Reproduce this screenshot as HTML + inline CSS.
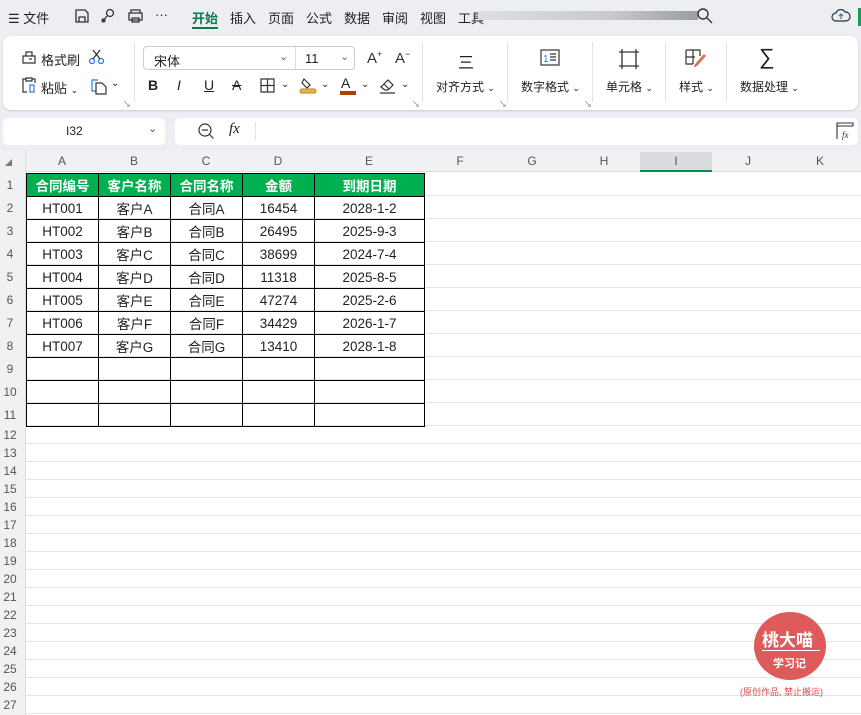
<!DOCTYPE html>
<html style="width:861px;height:715px;overflow:hidden"><head><meta charset="utf-8"><style>
*{margin:0;padding:0;box-sizing:border-box}
body{width:861px;height:715px;overflow:hidden;background:#eceef2;font-family:"Liberation Sans","Noto Sans CJK SC",sans-serif;color:#222;position:relative}
.a{position:absolute;white-space:nowrap}
.t{font-size:13px}
.gh{font-size:12px;color:#555;text-align:center}
svg{position:absolute}
</style></head><body>
<div class="a t" style="left:8px;top:8px">☰ 文件</div>
<svg style="left:74px;top:8px" width="16" height="16" fill="none" stroke="#333" stroke-width="1.3"><path d="M2 2h9l3 3v9H2z M5 9h6v5H5z"/></svg>
<svg style="left:100px;top:8px" width="16" height="16" fill="none" stroke="#333" stroke-width="1.3"><circle cx="10" cy="5" r="3.5"/><path d="M7 8L3 13"/><circle cx="3.5" cy="12.5" r="1.5"/></svg>
<svg style="left:127px;top:8px" width="17" height="16" fill="none" stroke="#333" stroke-width="1.3"><path d="M4 5V2h9v3M2 5h13v7H2zM5 10h7v4H5z"/></svg>
<div class="a t" style="left:155px;top:7px">···</div>
<div class="a t" style="left:192px;top:8px;color:#0d7a4d;font-weight:bold">开始</div>
<div class="a" style="left:192px;top:27px;width:26px;height:2px;background:#0d7a4d"></div>
<div class="a t" style="left:230px;top:8px">插入</div>
<div class="a t" style="left:268px;top:8px">页面</div>
<div class="a t" style="left:306px;top:8px">公式</div>
<div class="a t" style="left:344px;top:8px">数据</div>
<div class="a t" style="left:382px;top:8px">审阅</div>
<div class="a t" style="left:420px;top:8px">视图</div>
<div class="a t" style="left:458px;top:8px">工具</div>
<div class="a" style="left:478px;top:11px;width:220px;height:9px;background:linear-gradient(90deg,#dcdfe3,#c7cace 60%,#9a9da2)"></div>
<svg style="left:696px;top:7px" width="18" height="18" fill="none" stroke="#333" stroke-width="1.4"><circle cx="7" cy="7" r="5"/><path d="M11 11l5 5"/></svg>
<svg style="left:831px;top:7px" width="20" height="16" fill="none" stroke="#333" stroke-width="1.2"><path d="M5 14a4 4 0 010-8 5 5 0 019-1 4 4 0 011 9z"/><path d="M10 12V7M8 9l2-2 2 2" stroke="#2a7ae2"/></svg>
<div class="a" style="left:858px;top:8px;width:3px;height:18px;background:#0d9f58"></div>
<div class="a" style="left:3px;top:36px;width:855px;height:74px;background:#fff;border-radius:8px;box-shadow:0 1px 2px #ccc"></div>
<svg style="left:20px;top:48px" width="18" height="18" fill="none" stroke="#333" stroke-width="1.2"><path d="M3 8h12v7H3zM6 8V4h6v4M9 11h3" /></svg>
<div class="a t" style="left:41px;top:50px">格式刷</div>
<svg style="left:88px;top:48px" width="18" height="18" fill="none" stroke="#2a7ae2" stroke-width="1.3"><circle cx="4" cy="13" r="2.5"/><circle cx="13" cy="13" r="2.5"/><path d="M5 11L12 2M12 11L5 2" stroke="#333"/></svg>
<svg style="left:20px;top:76px" width="18" height="18" fill="none" stroke="#333" stroke-width="1.2"><path d="M6 3H3v13h4M12 3h3v4M6 2h6v3H6z"/><rect x="10" y="9" width="4" height="7" stroke="#2a7ae2"/></svg>
<div class="a t" style="left:41px;top:78px">粘贴 <span style="font-size:9px">⌄</span></div>
<svg style="left:90px;top:77px" width="18" height="18" fill="none" stroke="#333" stroke-width="1.2"><path d="M8 3H2v11h4" stroke="#2a7ae2"/><path d="M6 6h6l4 4v7H6z"/></svg>
<div class="a" style="left:111px;top:78px;font-size:10px">⌄</div>
<div class="a" style="left:123px;top:99px;font-size:8px;color:#777">↘</div>
<div class="a" style="left:134px;top:42px;width:1px;height:60px;background:#e3e3e3"></div>
<div class="a" style="left:143px;top:46px;width:212px;height:24px;border:1px solid #ccc;border-radius:4px"></div>
<div class="a" style="left:295px;top:47px;width:1px;height:22px;background:#ddd"></div>
<div class="a t" style="left:154px;top:51px">宋体</div>
<div class="a" style="left:279px;top:50px;font-size:11px;color:#666">⌄</div>
<div class="a t" style="left:305px;top:51px">11</div>
<div class="a" style="left:340px;top:50px;font-size:11px;color:#666">⌄</div>
<div class="a" style="left:367px;top:49px;font-size:15px;color:#333">A<sup style="font-size:9px">+</sup></div>
<div class="a" style="left:395px;top:49px;font-size:15px;color:#333">A<sup style="font-size:9px">−</sup></div>
<div class="a" style="left:148px;top:77px;font-size:14px;font-weight:bold">B</div>
<div class="a" style="left:177px;top:77px;font-size:14px;font-style:italic">I</div>
<div class="a" style="left:204px;top:77px;font-size:14px;text-decoration:underline">U</div>
<div class="a" style="left:232px;top:77px;font-size:14px;text-decoration:line-through">A</div>
<svg style="left:260px;top:78px" width="15" height="15" fill="none" stroke="#333" stroke-width="1.2"><path d="M1 1h13v13H1zM7.5 1v13M1 7.5h13"/></svg>
<div class="a" style="left:281px;top:79px;font-size:10px">⌄</div>
<svg style="left:299px;top:76px" width="18" height="18" fill="none" stroke="#333" stroke-width="1.2"><path d="M5 3l6 6-3 3-5-5z"/><rect x="1" y="13" width="16" height="4" rx="2" fill="#e5b54a" stroke="#c49530"/></svg>
<div class="a" style="left:321px;top:79px;font-size:10px">⌄</div>
<div class="a" style="left:341px;top:75px;font-size:14px">A</div>
<div class="a" style="left:340px;top:91px;width:16px;height:4px;background:#b23c0d"></div>
<div class="a" style="left:361px;top:79px;font-size:10px">⌄</div>
<svg style="left:379px;top:77px" width="18" height="17" fill="none" stroke="#333" stroke-width="1.2"><path d="M2 10l7-7 5 5-5 5H6zM5 7l5 5M1 16h15"/></svg>
<div class="a" style="left:401px;top:79px;font-size:10px">⌄</div>
<div class="a" style="left:412px;top:99px;font-size:8px;color:#777">↘</div>
<div class="a" style="left:422px;top:42px;width:1px;height:60px;background:#e3e3e3"></div>
<div class="a" style="left:458px;top:49px;font-size:16px">三</div>
<div class="a" style="left:436px;top:78px;font-size:12px">对齐方式 <span style="font-size:9px">⌄</span></div>
<div class="a" style="left:499px;top:99px;font-size:8px;color:#777">↘</div>
<div class="a" style="left:507px;top:42px;width:1px;height:60px;background:#e3e3e3"></div>
<svg style="left:540px;top:49px" width="20" height="18" fill="none" stroke="#333" stroke-width="1.2"><rect x="1" y="1" width="18" height="15"/><path d="M10 5h6M10 8h6M10 11h6"/><text x="3" y="13" font-size="10" fill="#2a7ae2" stroke="none" font-family="Liberation Sans">1</text></svg>
<div class="a" style="left:521px;top:78px;font-size:12px">数字格式 <span style="font-size:9px">⌄</span></div>
<div class="a" style="left:584px;top:99px;font-size:8px;color:#777">↘</div>
<div class="a" style="left:592px;top:42px;width:1px;height:60px;background:#e3e3e3"></div>
<svg style="left:618px;top:48px" width="22" height="22" fill="none" stroke="#333" stroke-width="1.3"><path d="M4 1v20M18 1v20M1 4h20M1 18h20"/></svg>
<div class="a" style="left:606px;top:78px;font-size:12px">单元格 <span style="font-size:9px">⌄</span></div>
<div class="a" style="left:665px;top:42px;width:1px;height:60px;background:#e3e3e3"></div>
<svg style="left:685px;top:49px" width="22" height="20" fill="none" stroke="#333" stroke-width="1.2"><path d="M1 1h14v6M1 1v14h7M8 1v14M1 8h9"/><path d="M20 7l-8 9-2 1 1-2 8-9z" stroke="#d9572a"/></svg>
<div class="a" style="left:679px;top:78px;font-size:12px">样式 <span style="font-size:9px">⌄</span></div>
<div class="a" style="left:726px;top:42px;width:1px;height:60px;background:#e3e3e3"></div>
<div class="a" style="left:759px;top:44px;font-size:22px">∑</div>
<div class="a" style="left:740px;top:78px;font-size:12px">数据处理 <span style="font-size:9px">⌄</span></div>
<div class="a" style="left:3px;top:118px;width:162px;height:27px;background:#fff;border-radius:5px"></div>
<div class="a" style="left:66px;top:124px;font-size:12px">I32</div>
<div class="a" style="left:148px;top:122px;font-size:11px;color:#555">⌄</div>
<div class="a" style="left:175px;top:118px;width:683px;height:27px;background:#fff;border-radius:5px"></div>
<svg style="left:197px;top:122px" width="18" height="18" fill="none" stroke="#333" stroke-width="1.2"><circle cx="8" cy="8" r="6"/><path d="M5 8h6M12.5 12.5l4 4"/></svg>
<div class="a" style="left:229px;top:121px;font-size:15px;font-style:italic;font-family:'Liberation Serif',serif">fx</div>
<div class="a" style="left:255px;top:122px;width:1px;height:18px;background:#e3e3e3"></div>
<svg style="left:836px;top:122px" width="18" height="18" fill="none" stroke="#333" stroke-width="1.1"><path d="M1 17V1h16v3M1 4h16"/><text x="6" y="16" font-size="9" font-style="italic" fill="#333" stroke="none" font-family="Liberation Serif">fx</text></svg>
<div class="a" style="left:0;top:150px;width:861px;height:565px;background:#fff;overflow:hidden">
<div class="a" style="left:0;top:0;width:861px;height:22px;background:#f0f1f3;border-bottom:1px solid #ddd"></div>
<div class="a" style="left:0;top:0;width:26px;height:565px;background:#f0f1f3;border-right:1px solid #ddd"></div>
<div class="a" style="left:5px;top:8px;font-size:7px;color:#777">◢</div>
<div class="a" style="left:640px;top:2px;width:72px;height:19px;background:#dadcdf"></div>
<div class="a" style="left:640px;top:20px;width:72px;height:2px;background:#0d8a55"></div>
<div id="colh"></div>
<div id="rows"></div>
</div>
<table class="a" style="left:26px;top:173px;border-collapse:collapse;font-size:13.5px;text-align:center">
<tr style="background:#00b050;color:#fff;font-weight:bold;height:23px"><td style="width:72px;border:1px solid #000">合同编号</td><td style="width:72px;border:1px solid #000">客户名称</td><td style="width:72px;border:1px solid #000">合同名称</td><td style="width:72px;border:1px solid #000">金额</td><td style="width:110px;border:1px solid #000">到期日期</td></tr>
<tr style="height:23px"><td style="border:1px solid #000">HT001</td><td style="border:1px solid #000">客户A</td><td style="border:1px solid #000">合同A</td><td style="border:1px solid #000">16454</td><td style="border:1px solid #000">2028-1-2</td></tr>
<tr style="height:23px"><td style="border:1px solid #000">HT002</td><td style="border:1px solid #000">客户B</td><td style="border:1px solid #000">合同B</td><td style="border:1px solid #000">26495</td><td style="border:1px solid #000">2025-9-3</td></tr>
<tr style="height:23px"><td style="border:1px solid #000">HT003</td><td style="border:1px solid #000">客户C</td><td style="border:1px solid #000">合同C</td><td style="border:1px solid #000">38699</td><td style="border:1px solid #000">2024-7-4</td></tr>
<tr style="height:23px"><td style="border:1px solid #000">HT004</td><td style="border:1px solid #000">客户D</td><td style="border:1px solid #000">合同D</td><td style="border:1px solid #000">11318</td><td style="border:1px solid #000">2025-8-5</td></tr>
<tr style="height:23px"><td style="border:1px solid #000">HT005</td><td style="border:1px solid #000">客户E</td><td style="border:1px solid #000">合同E</td><td style="border:1px solid #000">47274</td><td style="border:1px solid #000">2025-2-6</td></tr>
<tr style="height:23px"><td style="border:1px solid #000">HT006</td><td style="border:1px solid #000">客户F</td><td style="border:1px solid #000">合同F</td><td style="border:1px solid #000">34429</td><td style="border:1px solid #000">2026-1-7</td></tr>
<tr style="height:23px"><td style="border:1px solid #000">HT007</td><td style="border:1px solid #000">客户G</td><td style="border:1px solid #000">合同G</td><td style="border:1px solid #000">13410</td><td style="border:1px solid #000">2028-1-8</td></tr>
<tr style="height:23px"><td style="border:1px solid #000"></td><td style="border:1px solid #000"></td><td style="border:1px solid #000"></td><td style="border:1px solid #000"></td><td style="border:1px solid #000"></td></tr>
<tr style="height:23px"><td style="border:1px solid #000"></td><td style="border:1px solid #000"></td><td style="border:1px solid #000"></td><td style="border:1px solid #000"></td><td style="border:1px solid #000"></td></tr>
<tr style="height:23px"><td style="border:1px solid #000"></td><td style="border:1px solid #000"></td><td style="border:1px solid #000"></td><td style="border:1px solid #000"></td><td style="border:1px solid #000"></td></tr>
</table>
<div class="a" style="left:754px;top:612px;width:72px;height:68px;border-radius:50%;background:#df5a5a"></div>
<div class="a" style="left:762px;top:626px;font-size:17px;font-weight:bold;color:#fff">桃大喵</div>
<div class="a" style="left:762px;top:650px;width:58px;height:1px;background:#fff"></div>
<div class="a" style="left:773px;top:655px;font-size:11px;font-weight:bold;color:#fff">学习记</div>
<div class="a" style="left:740px;top:685px;font-size:9px;color:#d84a4a">(原创作品, 禁止搬运)</div>
<script>
var h='';var L='ABCDEFGHIJK';for(var i=0;i<11;i++){var x=(i<5?26+72*i:424+72*(i-5));if(i==4)x=314;var w=(i==4?110:72);h+='<div class="a gh" style="left:'+x+'px;top:4px;width:'+w+'px">'+L[i]+'</div>';}
document.getElementById('colh').innerHTML=h;
var r='';var y=23;for(var n=1;n<=27;n++){var hh=n<=11?23:18;r+='<div class="a gh" style="left:0;top:'+(y+(hh-14)/2)+'px;width:20px">'+n+'</div>';r+='<div class="a" style="left:26px;top:'+(y+hh-1)+'px;width:835px;height:1px;background:#e4e4e4"></div>';y+=hh;}
document.getElementById('rows').innerHTML=r;
</script>
</body></html>
